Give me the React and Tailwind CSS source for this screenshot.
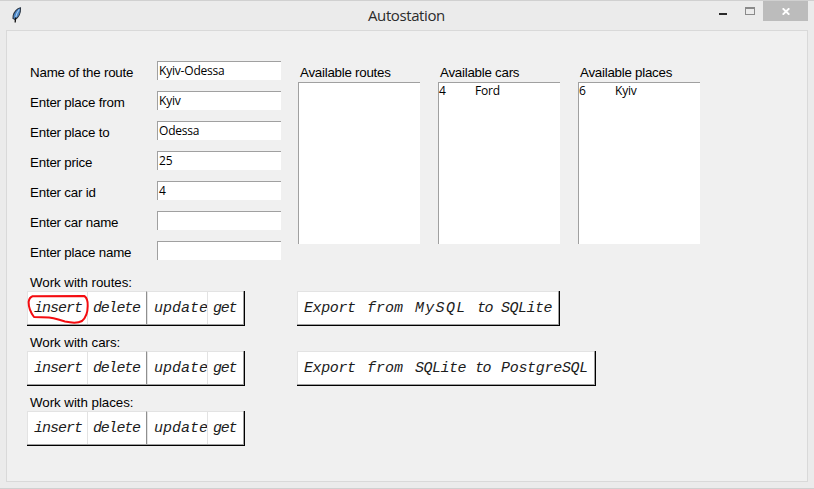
const fields = [
  ['Name of the route', 'Kyiv-Odessa'],
  ['Enter place from', 'Kyiv'],
  ['Enter place to', 'Odessa'],
  ['Enter price', '25'],
  ['Enter car id', '4'],
  ['Enter car name', ''],
  ['Enter place name', ''],
];

const lists = [
  { title: 'Available routes', rows: [] },
  { title: 'Available cars', rows: [['4', 'Ford']] },
  { title: 'Available places', rows: [['6', 'Kyiv']] },
];

const label = "font-['Liberation_Sans',Arial,sans-serif] text-[13.33px] leading-[16px] whitespace-nowrap";
const entry = "font-['Open_Sans','Noto_Sans',sans-serif] text-[12px] tracking-[-0.2px] whitespace-pre";
const mono = "font-['Liberation_Mono',monospace] italic text-[15px] whitespace-pre leading-[33px] text-[#1c1c1c]";

function Feather() {
  return (
    <svg className="ml-[11px] mt-[6px] h-[17px] w-[12px]" viewBox="0 0 12 17">
      <path d="M9.5 .8C6 1.4 3 5 2.2 8.5L2 11.5L4 12.5C7.5 10.8 9.8 6 9.5 .8Z" fill="#4a86c8" stroke="#2b3440" strokeWidth="1.1" />
      <path d="M8.3 2.5C6.5 4.5 5.3 7.5 4.6 10.5" fill="none" stroke="#a9cdf0" strokeWidth="1.1" />
      <path d="M4.8 10.5C4.3 12.5 4.2 13.5 4.2 15.5" fill="none" stroke="#111" strokeWidth="1.3" />
    </svg>
  );
}

function TitleBar() {
  return (
    <div className="flex h-[29px] items-start">
      <Feather />
      <div className="ml-[345px] mt-[1px] w-[78px] font-['Open_Sans','Noto_Sans',sans-serif] text-[15px] leading-[26px] tracking-[-0.4px] text-[#2b2b2b]">Autostation</div>
      <div className="ml-[273px] mt-[12px] h-[2px] w-[8px] bg-[#2a2a2a]" />
      <div className="ml-[18px] mt-[6px] h-[8px] w-[10px] border border-t-2 border-[#8a8a8a]" />
      <div className="ml-[8px] flex h-[20px] w-[45px] items-center justify-center bg-[#bcbcbc] pl-px">
        <svg className="h-[7px] w-[8px]" viewBox="0 0 8 7"><path d="M.7 .3L7.3 6.7M7.3 .3L.7 6.7" stroke="white" strokeWidth="1.9" /></svg>
      </div>
    </div>
  );
}

function Actions({ title, circled }) {
  return (
    <div className="h-[60px]">
      <div className={`ml-[3px] h-[16px] tracking-[-0.04px] ${label}`}>{title}</div>
      <div className="relative flex h-[35px] w-[218px] border-r border-b border-black">
        <div className={`flex flex-1 border-r border-b border-[#a0a0a0] bg-white ${mono}`}>
          <div className="w-[60px] border-t border-l border-[#e3e3e3] pl-[6px] tracking-[-1px]">insert</div>
          <div className="w-[60px] border-t border-r border-l border-t-[#e3e3e3] border-r-[#8f8f8f] border-l-[#e3e3e3] pl-[5px] tracking-[-1.2px]">delete</div>
          <div className="w-[60px] overflow-hidden border-t border-l border-[#e3e3e3] pl-[6px] tracking-[0px]">update</div>
          <div className="flex-1 border-t border-l border-[#e3e3e3] pl-[5px] tracking-[-1.2px]">get</div>
        </div>
        {circled && (
          <svg className="absolute top-0 left-0 h-[35px] w-[64px]" viewBox="0 0 64 35" fill="none">
            <path d="M5 5.3L57.5 5.1C60 7 61 10 60.7 15C60.7 22 58.5 27 55 30C51 32.2 44 31.8 38 30.5C32 29 28 26.9 22 26.5L7 26C4 22 1.6 17 1.6 11C2 8 3.2 6 5.5 5.2" stroke="#f40c10" strokeWidth="2" strokeLinejoin="round" />
          </svg>
        )}
      </div>
    </div>
  );
}

function ExportButton({ className, children }) {
  return (
    <div className={`h-[35px] border-r border-b border-black ${className}`}>
      <div className="h-full border-r border-b border-[#a0a0a0] bg-white">
        <div className={`flex h-full border-t border-l border-[#e3e3e3] pl-[6px] ${mono}`}>{children}</div>
      </div>
    </div>
  );
}

export default function App() {
  return (
    <div className="h-[489px] w-[814px] overflow-hidden border-t border-b border-[#d0d0d0] bg-[#ebebeb] text-black">
      <TitleBar />
      <div className="ml-[6px] h-[452px] w-[802px] border border-[#d9d9d9] bg-[#f0f0f0]">
        <div className="flex h-[213px] pt-[30px]">
          <div className="ml-[23px] w-[268px]">
            {fields.map(([name, value]) => (
              <div key={name} className="flex h-[30px]">
                <div className={`w-[127px] pt-[4px] tracking-[-0.2px] ${label}`}>{name}</div>
                <div className={`h-[19px] w-[124px] border-t border-l border-[#a0a0a0] bg-white pl-px leading-[18px] ${entry}`}>{value}</div>
              </div>
            ))}
          </div>
          <div className="flex gap-[18px]">
            {lists.map(({ title, rows }) => (
              <div key={title} className="w-[122px]">
                <div className={`h-[21px] pt-[4px] pl-[2px] tracking-[-0.25px] ${label}`}>{title}</div>
                <div className="h-[162px] border-t border-l border-[#a0a0a0] bg-white">
                  {rows.map(([id, name]) => (
                    <div key={id} className={`flex leading-[16px] ${entry}`}>
                      <span className="w-[36px]">{id}</span>
                      <span>{name}</span>
                    </div>
                  ))}
                </div>
              </div>
            ))}
          </div>
        </div>
        <div className="ml-[20px] mt-[31px] flex gap-[52px]">
          <div className="w-[218px]">
            <Actions title="Work with routes:" circled />
            <Actions title="Work with cars:" />
            <Actions title="Work with places:" />
          </div>
          <div className="flex flex-col gap-[25px] pt-[16px]">
            <ExportButton className="w-[263px]">
              <span className="w-[63px] tracking-[-0.4px]">Export</span>
              <span className="w-[48px]">from</span>
              <span className="w-[62px] tracking-[1.3px]">MySQL</span>
              <span className="w-[24px] tracking-[-1.5px]">to</span>
              <span className="tracking-[-0.5px]">SQLite</span>
            </ExportButton>
            <ExportButton className="w-[299px]">
              <span className="w-[63px] tracking-[-0.4px]">Export</span>
              <span className="w-[48px]">from</span>
              <span className="w-[60px] tracking-[-0.5px]">SQLite</span>
              <span className="w-[26px] tracking-[-1.5px]">to</span>
              <span className="tracking-[-0.3px]">PostgreSQL</span>
            </ExportButton>
          </div>
        </div>
      </div>
    </div>
  );
}
